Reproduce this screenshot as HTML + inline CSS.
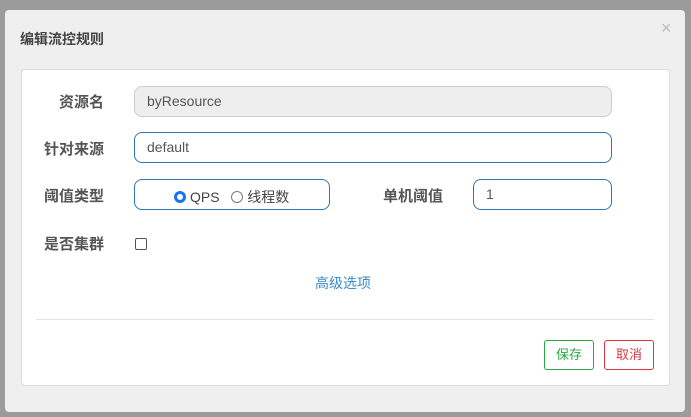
<!DOCTYPE html>
<html><head><meta charset="utf-8"><style>
body{margin:0;width:691px;height:417px;background:#9b9b9b;position:relative;overflow:hidden;font-family:"Liberation Sans","Noto Sans CJK SC",sans-serif;}
.dlg{position:absolute;left:5px;top:10px;width:680px;height:402px;background:#efefef;border-radius:4px;}
.title{position:absolute;left:15px;top:19px;font-size:14px;font-weight:bold;color:#444;}
.x{position:absolute;left:656px;top:8px;font-size:18px;color:#bbb;}
.card{position:absolute;left:16px;top:59px;width:647px;height:315px;background:#fff;border:1px solid #ddd;border-radius:4px;}
.lbl{position:absolute;font-size:15px;font-weight:bold;color:#555;text-align:right;width:90px;}
.inp{position:absolute;box-sizing:border-box;border:1px solid #2e75b6;border-radius:8px;font-size:14px;color:#555;padding-left:12px;line-height:29px;}
.btn{position:absolute;box-sizing:border-box;width:50px;height:30px;border-radius:3px;font-size:13px;text-align:center;line-height:28px;}
.r{display:inline-block;width:12px;height:12px;border:1px solid #777;border-radius:50%;vertical-align:-1px;margin-right:4px;box-sizing:border-box;}
</style></head><body>
<div class="dlg">
<div class="title">编辑流控规则</div>
<div class="x">×</div>
<div class="card"></div>
</div>
<div class="lbl" style="left:14px;top:91px">资源名</div>
<div class="inp" style="left:134px;top:86px;width:478px;height:31px;background:#eee;border-color:#ccc;">byResource</div>
<div class="lbl" style="left:14px;top:138px">针对来源</div>
<div class="inp" style="left:134px;top:132px;width:478px;height:31px;">default</div>
<div class="lbl" style="left:14px;top:185px">阈值类型</div>
<div class="inp" style="left:134px;top:179px;width:196px;height:31px;padding-left:39px;padding-top:3px;font-size:14px;color:#444;"><span class="r" style="border:3px solid #1a73e8;"></span>QPS&nbsp;&nbsp;&nbsp;<span class="r"></span>线程数</div>
<div class="lbl" style="left:353px;top:185px">单机阈值</div>
<div class="inp" style="left:473px;top:179px;width:139px;height:31px;">1</div>
<div class="lbl" style="left:14px;top:233px">是否集群</div>
<div style="position:absolute;left:135px;top:238px;width:12px;height:12px;border:1px solid #555;border-radius:2px;box-sizing:border-box;"></div>
<div style="position:absolute;left:315px;top:273px;font-size:14px;color:#3a8ccc;">高级选项</div>
<div style="position:absolute;left:36px;top:319px;width:618px;height:1px;background:#e2e2e2;"></div>
<div class="btn" style="left:544px;top:340px;border:1px solid #28a745;color:#28a745;">保存</div>
<div class="btn" style="left:604px;top:340px;border:1px solid #dc3545;color:#dc3545;">取消</div>
</body></html>
